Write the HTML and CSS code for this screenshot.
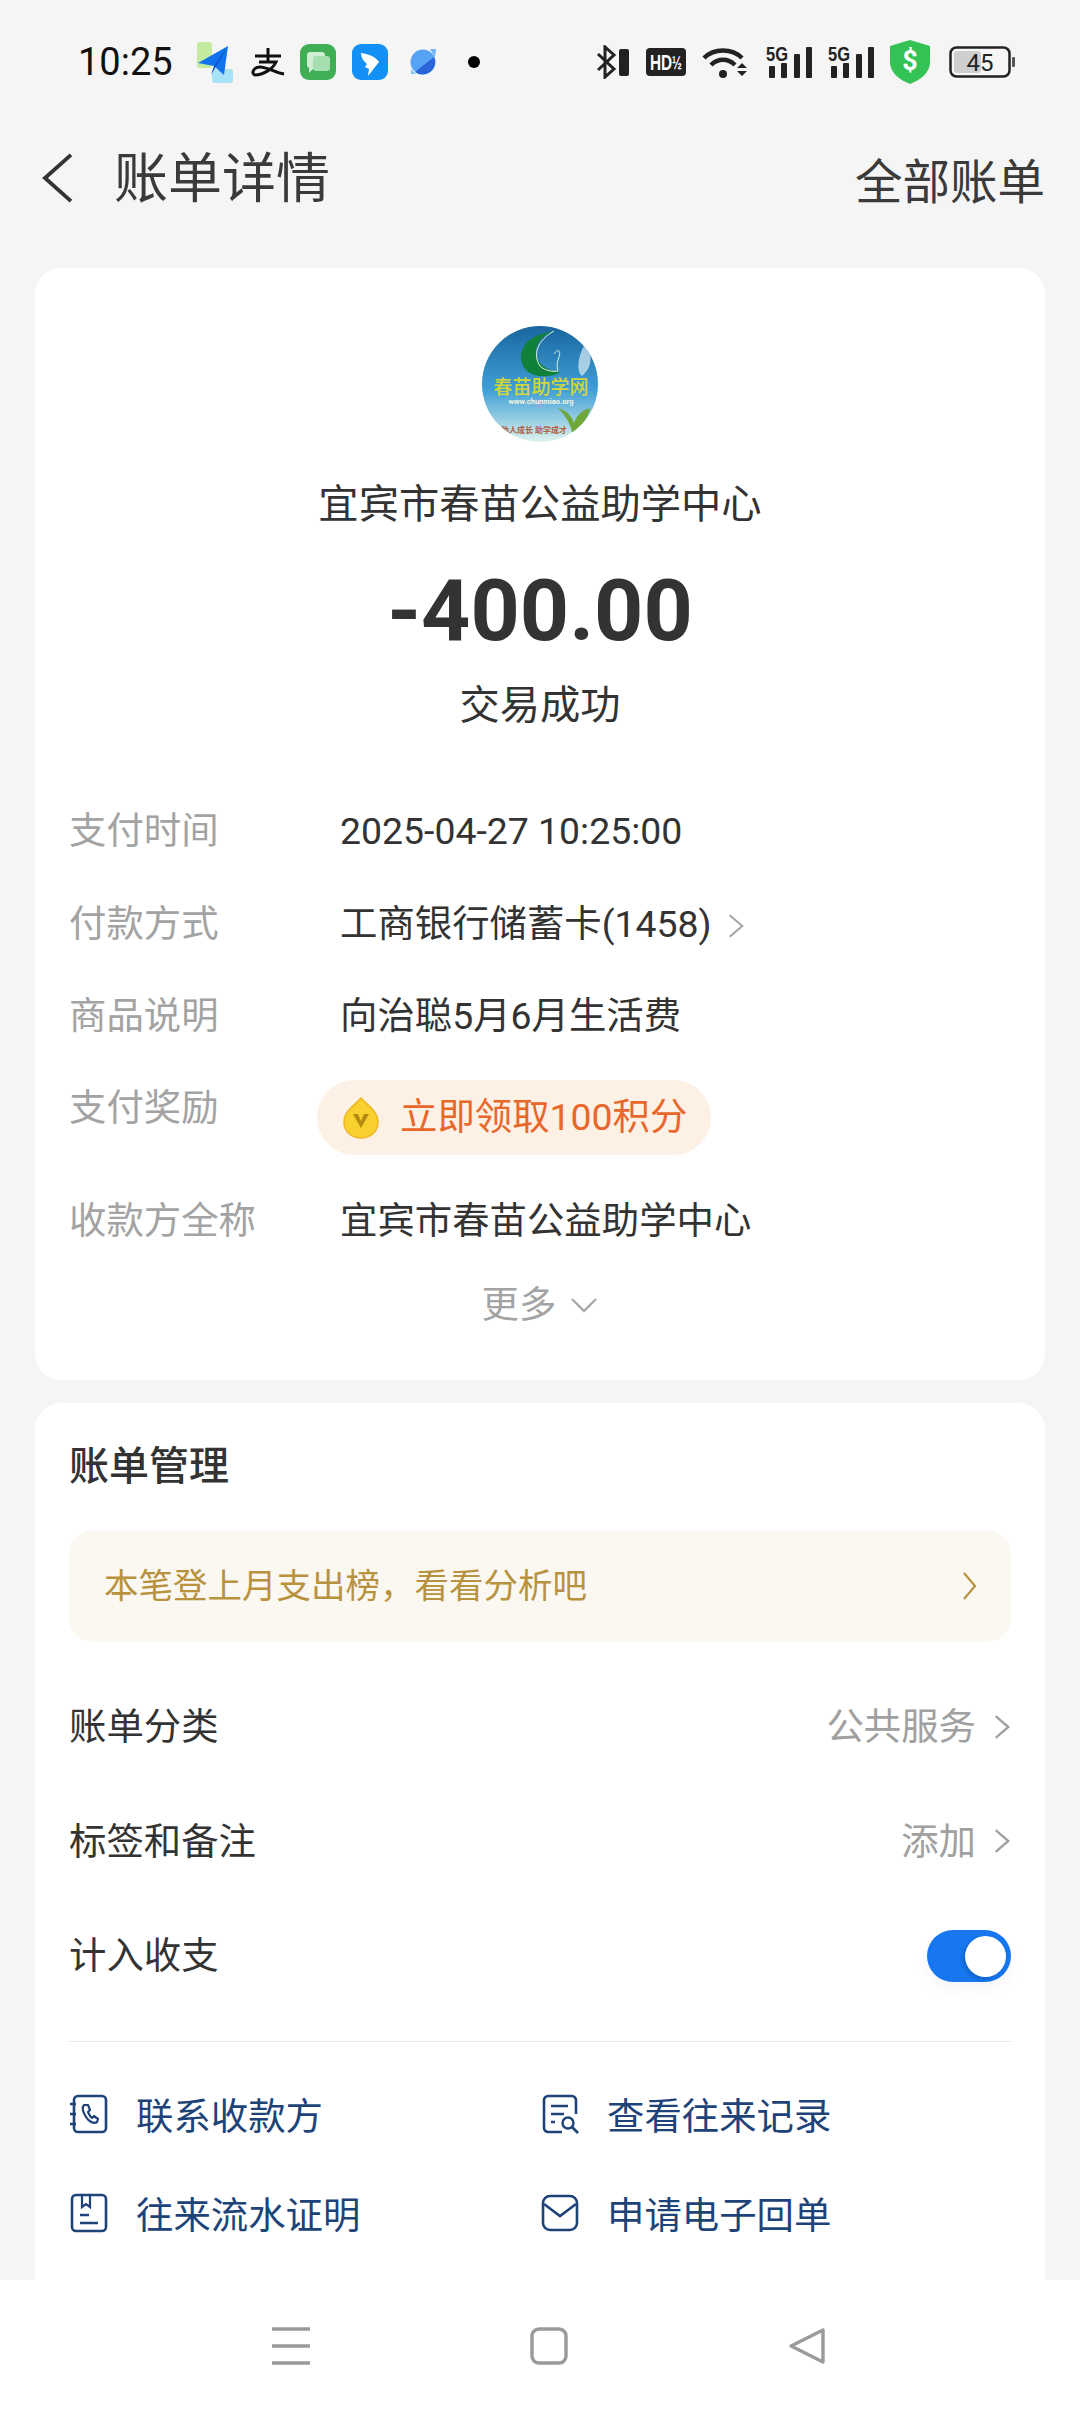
FILE: index.html
```html
<!DOCTYPE html>
<html lang="zh-CN">
<head>
<meta charset="utf-8">
<title>账单详情</title>
<link rel="stylesheet" href="styles.css">
</head>
<body>
<div class="screen">
  <div class="status">
    <div class="status-left">
      <span class="time">10:25</span>
      <svg class="ic-plane" viewBox="0 0 46 46"><rect x="7" y="3" width="15" height="26" rx="3" fill="#c4eaa0"/><rect x="22" y="30" width="21" height="14" rx="3" fill="#a8e2f7"/><path d="M8 24 L38 7 L34 36 L24 27 Z" fill="#1273ee"/><path d="M24 27 L38 7 L21 36 Z" fill="#0b52c4"/></svg>
      <svg class="ic-zhi" viewBox="0 0 34 30"><path d="M4 9H30M17 1V14M8 15H25C22 22 12 28 4 28 0 27 2 20 9 20 16 20 25 26 33 27" fill="none" stroke="#111" stroke-width="3"/></svg>
      <svg class="ic-app" viewBox="0 0 36 36"><rect width="36" height="36" rx="9" fill="#3fae55"/><rect x="7" y="8" width="18" height="16" rx="3" fill="#cfeed3"/><rect x="13" y="12" width="17" height="15" rx="3" fill="#a6dfb0"/><path d="M9 24V29L14 24Z" fill="#cfeed3"/></svg>
      <svg class="ic-app ic-ding" viewBox="0 0 36 36"><rect width="36" height="36" rx="9" fill="#1290f5"/><path d="M9 9C17 10 24 13 27 18L16 32 17 25 13 23 15 20C11 17 9 13 9 9Z" fill="#fff"/></svg>
      <svg class="ic-app" viewBox="0 0 36 36"><circle cx="20" cy="18" r="12.5" fill="#56a2f4"/><path d="M31 13A12.5 12.5 0 0 1 12 28Z" fill="#2a64d8"/><path d="M27 5L33 5 32 13Z" fill="#6fb0f6"/><path d="M8 25L13 30 8 30Z" fill="#7cc8f6"/></svg>
      <svg class="ic-dot" viewBox="0 0 42 14"><circle cx="21" cy="7" r="6" fill="#000"/></svg>
    </div>
    <div class="status-right">
      <svg class="ic-bt" viewBox="0 0 34 34"><path d="M2 9L18 24 9 32V2L18 10 2 25" fill="none" stroke="#222" stroke-width="3"/><rect x="23" y="4" width="10" height="27" rx="2" fill="#222"/></svg>
      <svg class="ic-hd" viewBox="0 0 40 28"><rect width="40" height="28" rx="4" fill="#222"/><text transform="translate(4 22) scale(.7 1)" class="svg-hd">HD</text><text transform="translate(26 21) scale(.62 1)" class="svg-hd-s">½</text></svg>
      <svg class="ic-wifi" viewBox="0 0 48 34"><path d="M2 13C12 3 30 3 40 13M9 20C16 13 26 13 33 20" fill="none" stroke="#222" stroke-width="4.5"/><circle cx="21" cy="29" r="4" fill="#222"/><path d="M35 23H45L40 18ZM35 26H45L40 31Z" fill="#222"/></svg>
      <svg class="ic-sig" viewBox="0 -5 46 44"><text x="0" y="16" textLength="22" lengthAdjust="spacingAndGlyphs" class="svg-5g">5G</text><rect x="3" y="21" width="6" height="12" rx="1" fill="#222"/><rect x="15" y="18" width="6" height="15" rx="1" fill="#222"/><rect x="28" y="9" width="6" height="24" rx="1" fill="#222"/><rect x="40" y="2" width="6" height="31" rx="1" fill="#222"/></svg>
      <svg class="ic-sig" viewBox="0 -5 46 44"><text x="0" y="16" textLength="22" lengthAdjust="spacingAndGlyphs" class="svg-5g">5G</text><rect x="3" y="21" width="6" height="12" rx="1" fill="#222"/><rect x="15" y="18" width="6" height="15" rx="1" fill="#222"/><rect x="28" y="9" width="6" height="24" rx="1" fill="#222"/><rect x="40" y="2" width="6" height="31" rx="1" fill="#222"/></svg>
      <svg class="ic-shield" viewBox="0 0 40 44"><path d="M20 0L40 6V22C40 33 30 40 20 44 10 40 0 33 0 22V6Z" fill="#35c254"/><text x="20" y="30" class="svg-dollar">$</text></svg>
      <svg class="ic-batt" viewBox="0 0 66 32"><rect x="1.5" y="1.5" width="59" height="29" rx="6" fill="none" stroke="#222" stroke-width="2.5"/><rect x="5" y="5" width="27" height="22" rx="3" fill="#cfcfcf"/><rect x="63" y="11" width="3" height="10" rx="1" fill="#555"/><text x="31" y="25" class="svg-batt">45</text></svg>
    </div>
  </div>

  <header class="head">
    <div class="head-left">
      <svg class="ic-back" viewBox="0 0 34 52"><path d="M31 2L4 26 31 50" fill="none" stroke="#333" stroke-width="4"/></svg>
      <h1 class="title">账单详情</h1>
    </div>
    <span class="all">全部账单</span>
  </header>

  <section class="card card-main">
    <svg class="avatar" viewBox="0 0 116 116">
      <defs>
        <linearGradient id="sky" x1="0" y1="0" x2="0" y2="1"><stop offset="0" stop-color="#1a669f"/><stop offset=".55" stop-color="#3f9fd5"/><stop offset=".85" stop-color="#a6d6e6"/><stop offset="1" stop-color="#dff2ee"/></linearGradient>
        <clipPath id="circ"><circle cx="58" cy="58" r="58"/></clipPath>
      </defs>
      <g clip-path="url(#circ)">
        <rect width="116" height="116" fill="url(#sky)"/>
        <path d="M102 20C110 26 112 40 100 50 94 46 96 30 102 20Z" fill="#cfe6f2" opacity=".75"/>
        <path d="M70 6C46 8 34 24 41 40 47 52 68 53 78 46 62 44 53 36 54 24 56 14 62 9 70 6Z" fill="#10803a"/>
        <path d="M72 5C56 14 50 28 58 40 63 45 72 46 76 45M72 28C76 22 80 24 76 34 74 40 76 45 76 45" fill="none" stroke="#d6f2dc" stroke-width="1"/>
        <text x="59" y="68" class="svg-logo">春苗助学网</text>
        <text x="59" y="78" class="svg-url">www.chunmiao.org</text>
        <text x="52" y="107" class="svg-motto">助人成长 助学成才</text>
        <path d="M90 106C88 96 82 88 76 82 84 84 90 90 92 97 94 90 100 84 108 82 106 94 98 100 92 106Z" fill="#6fa838"/>
      </g>
    </svg>
    <div class="name">宜宾市春苗公益助学中心</div>
    <div class="amount">-400.00</div>
    <div class="result">交易成功</div>

    <div class="rows">
      <div class="row"><span class="label">支付时间</span><span class="value">2025-04-27 10:25:00</span></div>
      <div class="row"><span class="label">付款方式</span><span class="value">工商银行储蓄卡(1458)</span><svg class="chev-s" viewBox="0 0 20 30"><path d="M3 3L17 15 3 27" fill="none" stroke="#a8a8a8" stroke-width="2.4"/></svg></div>
      <div class="row"><span class="label">商品说明</span><span class="value">向治聪5月6月生活费</span></div>
      <div class="row row-top"><span class="label">支付奖励</span>
        <span class="pill">
          <svg class="ic-coin" viewBox="0 0 36 42"><path d="M18 1C24 8 35 14 35 25 35 35 27 41 18 41 9 41 1 35 1 25 1 14 12 8 18 1Z" fill="#f8d12f" stroke="#efb724" stroke-width="1.5"/><path d="M10 17L18 31 26 17H21L18 24 15 17Z" fill="#b58a12"/></svg>
          立即领取100积分
        </span>
      </div>
      <div class="row row-payee"><span class="label">收款方全称</span><span class="value">宜宾市春苗公益助学中心</span></div>
      <div class="more"><span>更多</span><svg class="chev-d" viewBox="0 0 28 18"><path d="M2 3L14 15 26 3" fill="none" stroke="#a8a8a8" stroke-width="2.4"/></svg></div>
    </div>
  </section>

  <section class="card card-manage">
    <h2 class="manage-title">账单管理</h2>
    <div class="banner"><span class="banner-text">本笔登上月支出榜，看看分析吧</span><svg class="chev-b" viewBox="0 0 20 30"><path d="M5 2L16 15 5 28" fill="none" stroke="#b8923e" stroke-width="2.2"/></svg></div>
    <div class="opt opt-first"><span>账单分类</span><span class="opt-r">公共服务<svg class="chev-g" viewBox="0 0 20 30"><path d="M3 3L17 15 3 27" fill="none" stroke="#a0a0a0" stroke-width="2.6"/></svg></span></div>
    <div class="opt"><span>标签和备注</span><span class="opt-r">添加<svg class="chev-g" viewBox="0 0 20 30"><path d="M3 3L17 15 3 27" fill="none" stroke="#a0a0a0" stroke-width="2.6"/></svg></span></div>
    <div class="opt"><span>计入收支</span><span class="toggle"><i class="knob"></i></span></div>
    <div class="divider"></div>
    <div class="actions">
      <div class="act"><svg class="ic-act" viewBox="0 0 40 40"><rect x="5" y="2" width="32" height="36" rx="4" fill="none" stroke="#1d4379" stroke-width="2.6"/><path d="M1 10H7M1 20H7M1 30H7" stroke="#1d4379" stroke-width="2.4"/><path d="M15 11C13 13 14 18 17 23 20 28 25 30 28 28L29 25 25 22 23 24C21 23 20 20 19 18L21 16 19 11Z" fill="none" stroke="#1d4379" stroke-width="2.2" stroke-linejoin="round"/></svg><span>联系收款方</span></div>
      <div class="act"><svg class="ic-act" viewBox="0 0 40 40"><path d="M36 20V6C36 4 34 2 32 2H8C6 2 4 4 4 6V34C4 36 6 38 8 38H22" fill="none" stroke="#1d4379" stroke-width="2.6"/><path d="M11 12H28M11 20H24M11 28H15" stroke="#1d4379" stroke-width="2.6"/><circle cx="28" cy="29" r="5.5" fill="none" stroke="#1d4379" stroke-width="2.4"/><path d="M32 33L38 39" stroke="#1d4379" stroke-width="2.6"/></svg><span>查看往来记录</span></div>
      <div class="act"><svg class="ic-act" viewBox="0 0 40 40"><rect x="3" y="2" width="34" height="36" rx="4" fill="none" stroke="#1d4379" stroke-width="2.6"/><path d="M13 3V14L17 11 21 14V3" fill="none" stroke="#1d4379" stroke-width="2.2"/><path d="M11 22H20M11 30H29" stroke="#1d4379" stroke-width="2.6"/></svg><span>往来流水证明</span></div>
      <div class="act"><svg class="ic-act" viewBox="0 0 40 40"><rect x="3" y="3" width="34" height="34" rx="7" fill="none" stroke="#1d4379" stroke-width="2.6"/><path d="M4 11L20 23 36 11" fill="none" stroke="#1d4379" stroke-width="2.6"/></svg><span>申请电子回单</span></div>
    </div>
  </section>

  <nav class="nav">
    <svg class="nav-ic" viewBox="0 0 38 38"><path d="M0 2H38M0 19H38M0 36H38" stroke="#9a9a9a" stroke-width="3.4"/></svg>
    <svg class="nav-ic" viewBox="0 0 38 38"><rect x="2" y="2" width="34" height="34" rx="7" fill="none" stroke="#9a9a9a" stroke-width="3.4"/></svg>
    <svg class="nav-ic" viewBox="0 0 38 38"><path d="M35 3V35L3 19Z" fill="none" stroke="#9a9a9a" stroke-width="3.4" stroke-linejoin="round"/></svg>
  </nav>
</div>
</body>
</html>
```
FILE: styles.css
```css
* { box-sizing: border-box; margin: 0; padding: 0; }
html, body { width: 1080px; height: 2412px; overflow: hidden; }
body { font-family: Roboto, "Noto Sans CJK SC", sans-serif; background: #f5f5f5; color: #333; }
.screen { position: relative; width: 1080px; height: 2412px; overflow: hidden; background: #f5f5f5; }

/* status bar */
.status { height: 124px; display: flex; justify-content: space-between; align-items: center; padding: 0 65px 0 78px; }
.status-left, .status-right { display: flex; align-items: center; }
.status-left { gap: 15px; }
.status-right { gap: 16px; }
.time { font-size: 38px; width: 97px; color: #111; }
.ic-plane { width: 46px; height: 46px; }
.ic-zhi { width: 34px; height: 30px; }
.ic-app { width: 36px; height: 36px; }
.ic-ding { margin-left: 1px; }
.ic-dot { width: 42px; height: 14px; margin-left: -1px; }
.ic-bt { width: 34px; height: 34px; }
.ic-hd { width: 40px; height: 28px; }
.ic-wifi { width: 48px; height: 34px; }
.ic-sig { width: 46px; height: 44px; }
.ic-shield { width: 40px; height: 44px; }
.ic-batt { width: 66px; height: 32px; margin-left: 3px; }
.svg-hd { font: 700 22px "Liberation Sans", sans-serif; fill: #fff; }
.svg-hd-s { font: 700 19px "Liberation Sans", sans-serif; fill: #fff; }
.svg-5g { font: 700 20px "Liberation Sans", sans-serif; fill: #222; }
.svg-dollar { font: 700 27px Roboto, sans-serif; fill: #fff; text-anchor: middle; }
.svg-batt { font: 400 24px Roboto, sans-serif; fill: #222; text-anchor: middle; }
.svg-logo { font: 500 19px "Noto Sans CJK SC", sans-serif; fill: #d2d636; text-anchor: middle; }
.svg-url { font: 700 7.5px Roboto, sans-serif; fill: #f4f4e0; text-anchor: middle; }
.svg-motto { font: 700 8px "Noto Sans CJK SC", sans-serif; fill: #b0603c; text-anchor: middle; }

/* header */
.head { height: 108px; display: flex; justify-content: space-between; align-items: center; padding: 0 35px 0 41px; margin-bottom: 36px; }
.head-left { display: flex; align-items: center; gap: 40px; }
.ic-back { width: 33px; height: 50px; }
.title { font-size: 54px; font-weight: 400; line-height: 74px; padding-top: 4px; color: #3a3a3a; }
.all { font-size: 47.5px; color: #3a3a3a; }

/* cards */
.card { margin: 0 35px; background: #fff; border-radius: 26px; padding-left: 34px; padding-right: 34px; }
.card-main { height: 1112px; padding-top: 58px; display: flex; flex-direction: column; align-items: center; }
.avatar { width: 116px; height: 116px; display: block; }
.name { font-size: 40.3px; line-height: 60px; margin-top: 33px; }
.amount { font-size: 86px; font-weight: 700; line-height: 110px; margin-top: 21px; }
.result { font-size: 40.3px; line-height: 60px; margin-top: 10px; }

.rows { align-self: stretch; margin-top: 49px; }
.row { display: flex; align-items: center; height: 92.4px; font-size: 37.4px; line-height: 92px; }
.row-top { align-items: flex-start; height: 92px; }
.row-payee { margin-top: 21px; }
.label { width: 271px; flex: none; color: #a3a3a3; }
.value { color: #333; }
.chev-s { width: 18px; height: 30px; margin-left: 15px; margin-top: 4px; }
.pill { display: flex; align-items: center; height: 75px; margin: 18px 0 0 -23px; padding: 0 24px 0 26px; border-radius: 38px; background: #fdf0e4; color: #e8672a; line-height: 75px; }
.ic-coin { width: 36px; height: 42px; margin-right: 21px; }
.more { height: 68px; display: flex; align-items: center; justify-content: center; gap: 14px; font-size: 37.4px; color: #a3a3a3; }
.chev-d { width: 28px; height: 18px; margin-top: 6px; }

.card-manage { margin-top: 23px; height: 1000px; padding-top: 34px; }
.manage-title { font-size: 40px; font-weight: 500; line-height: 60px; color: #333; }
.banner { margin-top: 33px; height: 112px; display: flex; justify-content: space-between; align-items: center; padding: 0 32px 0 35px; border-radius: 24px; background: #fbf8f1; color: #b8923e; font-size: 34.5px; }
.banner-text { margin-top: -7px; }
.chev-b { width: 20px; height: 30px; }
.opt { height: 114.5px; display: flex; justify-content: space-between; align-items: center; font-size: 37.4px; color: #333; }
.opt-first { margin-top: 25px; }
.opt-r { display: flex; align-items: center; gap: 17px; color: #a0a0a0; }
.chev-g { width: 18px; height: 30px; margin-top: 5px; }
.toggle { width: 84px; height: 52px; margin-top: 6px; border-radius: 26px; background: #1677f0; display: flex; align-items: center; justify-content: flex-end; padding-right: 5px; box-shadow: 0 8px 16px rgba(0,0,0,.04); }
.knob { width: 41px; height: 41px; border-radius: 50%; background: #fff; box-shadow: -2px 2px 4px rgba(0,0,0,.18); }
.divider { height: 1px; margin-top: 30px; background: #e8e8e8; }
.actions { margin-top: 23px; display: grid; grid-template-columns: 471px 1fr; grid-auto-rows: 99px; }
.act { display: flex; align-items: center; gap: 27px; font-size: 37.4px; color: #1d4379; }
.ic-act { width: 40px; height: 40px; flex: none; }

/* nav */
.nav { position: absolute; left: 0; right: 0; bottom: 0; height: 132px; background: #fff; display: flex; align-items: center; padding: 0 254px 0 272px; justify-content: space-between; }
.nav-ic { width: 38px; height: 38px; }
```
